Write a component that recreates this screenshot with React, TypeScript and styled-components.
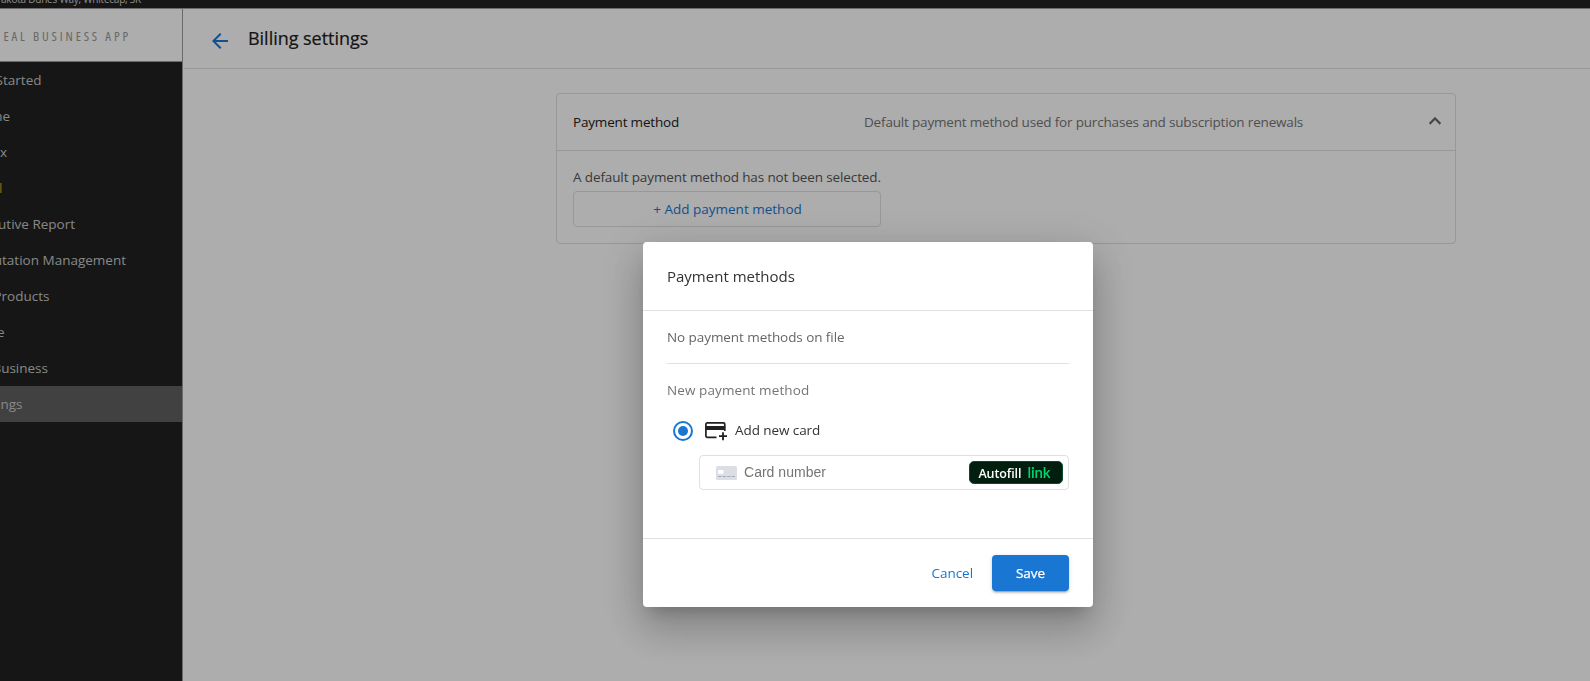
import React from "react";
import styled, { createGlobalStyle } from "styled-components";

const GlobalStyle = createGlobalStyle`
  * { box-sizing: border-box; }
  html, body { margin: 0; height: 100%; overflow: hidden; }
  body {
    font-family: "Open Sans", "Noto Sans", sans-serif;
    font-size: 13.5px;
    color: #212121;
    background: #fff;
  }
  button { font: inherit; }
`;

const Page = styled.div`
  display: flex;
  flex-direction: column;
  height: 681px;
  overflow: hidden;
`;

const TopBar = styled.div`
  display: flex;
  align-items: flex-end;
  height: 9px;
  flex: none;
  background: #212121;
  border-bottom: 1px solid #9e9e9e;
  overflow: hidden;
`;

const Address = styled.div`
  display: flex;
  justify-content: flex-end;
  width: 141px;
  margin-bottom: 2px;
  font-size: 10px;
  line-height: 14px;
  letter-spacing: -0.22px;
  white-space: nowrap;
  color: #d0d0d0;
`;

const Body = styled.div`
  display: flex;
  flex: 1;
  min-height: 0;
`;

const Sidebar = styled.aside`
  width: 183px;
  flex: none;
  background: #212121;
  border-right: 1px solid #9e9e9e;
`;

const Brand = styled.div`
  display: flex;
  align-items: center;
  justify-content: flex-end;
  height: 53px;
  padding: 1px 51px 0 0;
  background: #fff;
  border-bottom: 1px solid #9e9e9e;
  font-size: 13px;
  letter-spacing: 2.85px;
  font-stretch: 85%;
  white-space: nowrap;
  color: #9a9a9a;
`;

const NavItem = styled.div<{ $end: number; $active?: boolean; $accent?: boolean }>`
  display: flex;
  align-items: center;
  justify-content: flex-end;
  height: 36px;
  width: 182px;
  padding-right: ${(p) => 182 - p.$end}px;
  background: ${(p) => (p.$active ? "#616161" : "transparent")};
  color: ${(p) => (p.$accent ? "#d99a10" : "#c8c8c8")};
  white-space: nowrap;
  overflow: hidden;
`;

const Main = styled.main`
  flex: 1;
  min-width: 0;
  padding-left: 1px;
`;

const PageHeader = styled.header`
  display: flex;
  align-items: center;
  gap: 16px;
  height: 60px;
  padding: 0 0 0 24px;
  border-bottom: 1px solid #e0e0e0;
`;

const BackIcon = styled.svg`
  width: 24px;
  height: 24px;
  margin-top: 5px;
  fill: #1976d2;
`;

const PageTitle = styled.h1`
  margin: 0 0 2px;
  font-size: 18px;
  font-weight: 500;
  line-height: 24px;
  letter-spacing: -0.03px;
  -webkit-text-stroke: 0.2px currentColor;
`;

const Card = styled.section`
  width: 900px;
  margin: 24px 0 0 372px;
  border: 1px solid #e0e0e0;
  border-radius: 4px;
`;

const CardHeader = styled.div`
  display: flex;
  align-items: center;
  height: 57px;
  padding: 0 10px 0 16px;
  border-bottom: 1px solid #e0e0e0;
  letter-spacing: -0.18px;
`;

const CardTitle = styled.div`
  width: 291px;
`;

const CardDescription = styled.div`
  flex: 1;
  color: #757575;
`;

const Chevron = styled.svg`
  width: 20px;
  height: 20px;
  fill: #666;
  stroke: #666;
  stroke-width: 0.3;
  margin-top: -2px;
`;

const CardBody = styled.div`
  width: 341px;
  padding: 16px;
`;

const Notice = styled.div`
  line-height: 20px;
  padding-bottom: 4px;
  white-space: nowrap;
  letter-spacing: -0.12px;
  color: #555;
`;

const AddButton = styled.button`
  display: flex;
  align-items: center;
  justify-content: center;
  width: 308px;
  height: 36px;
  padding: 0 0 0 1px;
  border: 1px solid #e0e0e0;
  border-radius: 4px;
  background: transparent;
  color: #1976d2;
`;

const Backdrop = styled.div`
  position: fixed;
  inset: 0;
  background: rgba(0, 0, 0, 0.32);
`;

const Dialog = styled.div`
  position: absolute;
  left: 643px;
  top: 242px;
  display: flex;
  flex-direction: column;
  width: 450px;
  height: 365px;
  border-radius: 4px;
  background: #fff;
  box-shadow: 0 11px 15px -7px rgba(0, 0, 0, 0.2), 0 24px 38px 3px rgba(0, 0, 0, 0.14),
    0 9px 46px 8px rgba(0, 0, 0, 0.12);
`;

const DialogTitle = styled.h2`
  display: flex;
  align-items: center;
  margin: 0;
  height: 69px;
  padding: 0 24px;
  border-bottom: 1px solid #e0e0e0;
  font-size: 15px;
  font-weight: 400;
  color: #333;
`;

const DialogContent = styled.div`
  flex: 1;
  padding: 0 24px;
`;

const EmptyText = styled.div`
  height: 53px;
  padding-top: 16px;
  line-height: 20px;
  border-bottom: 1px solid #e0e0e0;
  letter-spacing: -0.07px;
  color: #666;
`;

const GroupLabel = styled.div`
  padding-top: 16px;
  line-height: 20px;
  letter-spacing: 0.1px;
  color: #757575;
`;

const Option = styled.label`
  display: flex;
  align-items: center;
  height: 40px;
  margin-top: 10px;
  padding: 1px 0 0 6px;
`;

const Radio = styled.span`
  display: grid;
  place-items: center;
  width: 20px;
  height: 20px;
  border: 2px solid #1976d2;
  border-radius: 50%;
  &::after {
    content: "";
    width: 10px;
    height: 10px;
    border-radius: 50%;
    background: #1976d2;
  }
`;

const AddCardIcon = styled.svg`
  width: 24px;
  height: 24px;
  margin: 0 7px 0 11px;
`;

const OptionText = styled.span`
  padding-bottom: 1px;
  letter-spacing: -0.08px;
  color: #333;
`;

const CardField = styled.div`
  display: flex;
  align-items: center;
  height: 35px;
  margin: 5px 0 0 32px;
  padding: 0 5px 0 16px;
  border: 1px solid #e0e0e0;
  border-radius: 4px;
  font-family: "Liberation Sans", Arial, sans-serif;
  font-size: 14px;
`;

const BlankCard = styled.svg`
  width: 21px;
  height: 14px;
  margin-right: 7px;
`;

const Placeholder = styled.span`
  flex: 1;
  letter-spacing: 0.02px;
  padding-bottom: 1px;
  color: #757575;
`;

const AutofillBadge = styled.button`
  display: flex;
  align-items: center;
  justify-content: center;
  gap: 6px;
  width: 94px;
  height: 23px;
  padding: 1px 3px 0 0;
  border: 1px solid #064e2b;
  border-radius: 5px;
  background: #011e0f;
  font-family: "Open Sans", sans-serif;
  font-size: 12.5px;
  font-weight: 600;
  letter-spacing: -0.1px;
  color: #fff;
`;

const LinkMark = styled.span`
  font-family: Lato, sans-serif;
  font-size: 15px;
  font-weight: 600;
  line-height: 18px;
  padding-bottom: 3px;
  letter-spacing: -0.1px;
  color: #00d66f;
`;

const DialogActions = styled.div`
  display: flex;
  align-items: center;
  justify-content: flex-end;
  gap: 19px;
  height: 69px;
  padding: 0 24px;
  border-top: 1px solid #e0e0e0;
`;

const Button = styled.button<{ $primary?: boolean }>`
  height: 36px;
  padding: 0 0 1px;
  width: ${(p) => (p.$primary ? "77px" : "auto")};
  border: 0;
  border-radius: 4px;
  letter-spacing: -0.05px;
  -webkit-text-stroke: ${(p) => (p.$primary ? "0.25px currentColor" : "0")};
  color: ${(p) => (p.$primary ? "#fff" : "#1976d2")};
  background: ${(p) => (p.$primary ? "#1976d2" : "transparent")};
  box-shadow: ${(p) =>
    p.$primary
      ? "0 3px 1px -2px rgba(0,0,0,.2), 0 2px 2px 0 rgba(0,0,0,.14), 0 1px 5px 0 rgba(0,0,0,.12)"
      : "none"};
`;

const navItems = [
  { text: "Started", end: 41.5 },
  { text: "ne", end: 10 },
  { text: "x", end: 7 },
  { text: "l", end: 2.5, accent: true },
  { text: "utive Report", end: 75 },
  { text: "utation Management", end: 126 },
  { text: "Products", end: 49.5 },
  { text: "e", end: 4.5 },
  { text: "Business", end: 48 },
  { text: "ngs", end: 22.5, active: true },
];

export default function App() {
  return (
    <>
      <GlobalStyle />
      <Page>
        <TopBar>
          <Address>akota Dunes Way, Whitecap, SK</Address>
        </TopBar>
        <Body>
          <Sidebar>
            <Brand>EAL BUSINESS APP</Brand>
            {navItems.map((item) => (
              <NavItem key={item.text} $end={item.end} $active={item.active} $accent={item.accent}>
                {item.text}
              </NavItem>
            ))}
          </Sidebar>
          <Main>
            <PageHeader>
              <BackIcon viewBox="0 0 24 24">
                <path d="M20 11H7.83l5.59-5.59L12 4l-8 8 8 8 1.41-1.41L7.83 13H20v-2z" />
              </BackIcon>
              <PageTitle>Billing settings</PageTitle>
            </PageHeader>
            <Card>
              <CardHeader>
                <CardTitle>Payment method</CardTitle>
                <CardDescription>
                  Default payment method used for purchases and subscription renewals
                </CardDescription>
                <Chevron viewBox="2 2 20 20">
                  <path d="M7.41 15.41 12 10.83l4.59 4.58L18 14l-6-6-6 6z" />
                </Chevron>
              </CardHeader>
              <CardBody>
                <Notice>A default payment method has not been selected.</Notice>
                <AddButton>+ Add payment method</AddButton>
              </CardBody>
            </Card>
          </Main>
        </Body>
      </Page>
      <Backdrop>
        <Dialog role="dialog">
          <DialogTitle>Payment methods</DialogTitle>
          <DialogContent>
            <EmptyText>No payment methods on file</EmptyText>
            <GroupLabel>New payment method</GroupLabel>
            <Option>
              <Radio />
              <AddCardIcon viewBox="0 0 24 24" fill="none" stroke="#212121">
                <path
                  d="M12.500 18.300H3.200a1.300 1.300 0 0 1-1.300-1.300V5.200a1.300 1.300 0 0 1 1.300-1.300h16.300a1.300 1.300 0 0 1 1.300 1.300V12"
                  strokeWidth="1.700"
                />
                <path d="M1.500 9H21" strokeWidth="4" />
                <path d="M15 17.200h8M19 13.200v8" strokeWidth="1.800" />
              </AddCardIcon>
              <OptionText>Add new card</OptionText>
            </Option>
            <CardField>
              <BlankCard viewBox="0 0 21 14">
                <rect width="21" height="14" rx="1.500" fill="#dcdee6" />
                <rect x="2" y="4" width="5.500" height="4" rx="1" fill="#fff" />
                <path d="M2 10.500h17" stroke="#a9adba" strokeDasharray="3.500 1" />
              </BlankCard>
              <Placeholder>Card number</Placeholder>
              <AutofillBadge>
                Autofill <LinkMark>link</LinkMark>
              </AutofillBadge>
            </CardField>
          </DialogContent>
          <DialogActions>
            <Button>Cancel</Button>
            <Button $primary>Save</Button>
          </DialogActions>
        </Dialog>
      </Backdrop>
    </>
  );
}
